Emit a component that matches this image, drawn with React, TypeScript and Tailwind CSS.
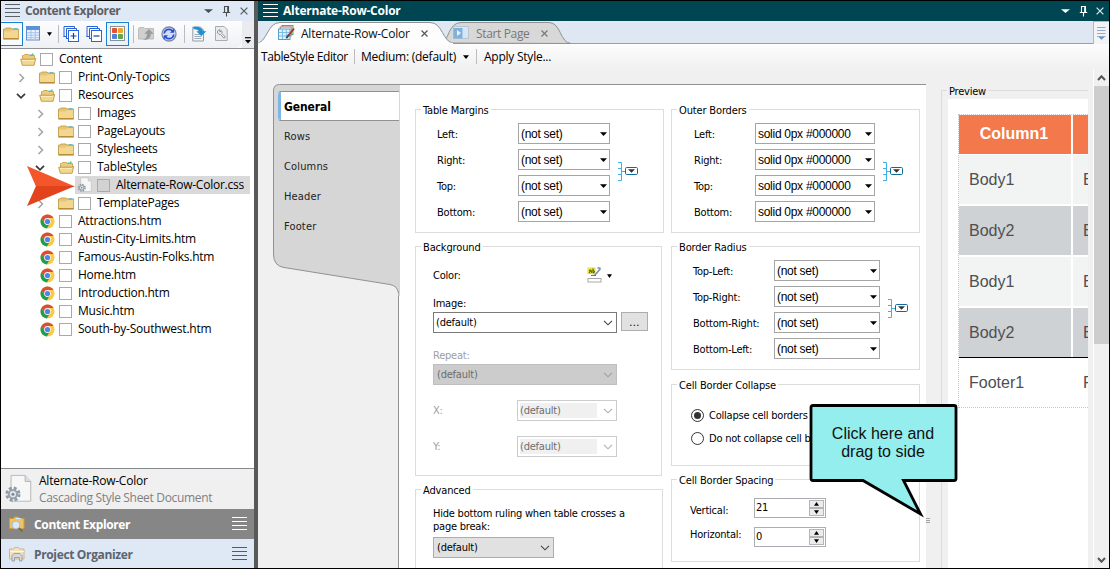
import React from "react";

const UI = "font-['Open_Sans','Noto_Sans',sans-serif] text-[12px] tracking-[-0.24px]";
const FORM = "font-['DejaVu_Sans_Condensed','DejaVu_Sans',sans-serif] text-[11px] tracking-[-0.22px]";
const SANS = "font-['Liberation_Sans',Arial,sans-serif] text-[12px] tracking-[-0.28px]";

/* ---------- icons ---------- */

function Lines({ color }: { color: string }) {
  return (
    <svg width="16" height="14" viewBox="0 0 16 14" shapeRendering="crispEdges" className="shrink-0">
      {[0, 4, 8, 12].map((y) => (
        <rect key={y} x="0" y={y} width="15" height="1" fill={color} />
      ))}
    </svg>
  );
}

function Folder({ open = false }: { open?: boolean }) {
  return (
    <svg width="17" height="15" viewBox="0 0 17 15" className="shrink-0">
      {open ? (
        <>
          <path d="M2.5 13V3.5h1l1-1h4l1 1h5V8" fill="#eccb80" stroke="#c9a24d" strokeWidth="0.9" />
          <path d="M9.5 3h3.5" stroke="#37b5d6" />
          <rect x="12" y="1.5" width="1.6" height="1.4" fill="#4bd06a" />
          <path d="M0.7 7.2h12.8l2.2-0.8-1.6 6.9H2.3z" fill="#f3d78f" stroke="#c39a40" strokeWidth="0.9" />
          <path d="M2 8.5h12" stroke="#fff1c8" strokeWidth="0.8" />
        </>
      ) : (
        <>
          <path d="M0.5 13.2V3.1h1.2l1-1.1H8l1 1h6.5v10.2z" fill="#e6c577" stroke="#c39c48" strokeWidth="0.9" />
          <path d="M10.5 2.8h4" stroke="#37b5d6" />
          <path d="M1 5.6h6.5l1.4-1.3h6.3V12.7H1z" fill="#f3d78f" />
          <path d="M1 12.5h14.5" stroke="#b98c3c" />
        </>
      )}
    </svg>
  );
}

function Chrome() {
  return (
    <svg width="15" height="15" viewBox="0 0 30 30" className="shrink-0">
      <circle cx="15" cy="15" r="14" fill="#fccb3d" />
      <path d="M2.9 8A14 14 0 0 1 27.1 8H15L9 18.5z" fill="#dc4b3e" />
      <path d="M2.9 8A14 14 0 0 0 13.6 28.9L20.5 18 9 18.5z" fill="#1a9d59" />
      <circle cx="15" cy="15" r="6.8" fill="#f4f4f4" />
      <circle cx="15" cy="15" r="5.2" fill="#4a86ec" />
    </svg>
  );
}

function CssFile({ size }: { size: number }) {
  return (
    <svg width={size} height={size} viewBox="0 0 28 32" className="shrink-0">
      <path d="M5.5 1.5h15l6 6.5v21h-21z" fill="#f7f7f7" stroke="#b5b5b5" />
      <path d="M20.5 1.500V8h6" fill="#dcdcdc" stroke="#b5b5b5" />
      <circle cx="7.5" cy="21.5" r="6.6" fill="none" stroke="#8f9aa5" strokeWidth="3" strokeDasharray="3.1 2.1" />
      <circle cx="7.5" cy="21.5" r="4.4" fill="#e4e9ee" stroke="#96a1ac" strokeWidth="2.2" />
      <circle cx="7.5" cy="21.5" r="1.6" fill="#7d8893" />
    </svg>
  );
}

function Caret({ color = "#000", w = 7 }: { color?: string; w?: number }) {
  return (
    <svg width={w} height="4" viewBox="0 0 6 4" className="shrink-0" preserveAspectRatio="none">
      <path d="M0 0.300h6L3 3.900z" fill={color} />
    </svg>
  );
}

function ChevronDown({ color }: { color: string }) {
  return (
    <svg width="10" height="6" viewBox="0 0 10 6" className="shrink-0">
      <path d="M1 0.8l4 4 4-4" fill="none" stroke={color} strokeWidth="1.1" />
    </svg>
  );
}

function Pin({ color }: { color: string }) {
  return (
    <svg width="9" height="11" viewBox="0 0 9 11" className="shrink-0">
      <path d="M2.5 6V0.5h4V6M5.7 0.5V6M0.8 6.5h7.4M4.5 7v3.6" fill="none" stroke={color} strokeWidth="1.1" />
    </svg>
  );
}

function Cross({ color, size = 8 }: { color: string; size?: number }) {
  return (
    <svg width={size} height={size} viewBox="0 0 8 8" className="shrink-0">
      <path d="M0.6 0.6l6.8 6.8M7.4 0.6L0.6 7.4" stroke={color} strokeWidth="1.3" />
    </svg>
  );
}

function Link() {
  return (
    <svg width="20" height="20" viewBox="0 0 20 20" className="shrink-0">
      <path d="M0 0.5h3.5v18H0M0 6.5h3.5M0 12.5h3.5M3.5 9.5h3.5" fill="none" stroke="#3db1ea" />
      <rect x="7.5" y="5.5" width="12" height="7" rx="1.2" fill="#fff" stroke="#0d6a9c" />
      <path d="M10 7.3h7l-3.5 3.5z" fill="#333" />
    </svg>
  );
}

/* ---------- content explorer ---------- */

function Divider() {
  return <div className="h-[18px] w-px shrink-0 bg-[#b9bcc2]" />;
}

function ExplorerToolbar() {
  return (
    <div className="flex h-[28px] shrink-0 border-b border-[#8f9297] bg-[#f6f8fa]">
      <div className="flex w-[241px] items-center rounded-br-lg bg-linear-to-b from-[#fdfdfe] to-[#eef0f3] pb-[2px]">
        <div className="flex h-[24px] w-[22px] items-center border border-l-0 border-[#1c7fd6] bg-[#f7fbff] pl-[2px]">
          <Folder />
        </div>
        <svg width="14" height="15" viewBox="0 0 14 15" className="ml-[3px]">
          <rect x="0.5" y="0.5" width="13" height="13.5" fill="#e9f2fe" stroke="#5f90cf" />
          <rect x="0.5" y="0.5" width="13" height="3.5" fill="#5a92dc" />
          <path d="M1 6.7h12M1 9.2h12M1 11.7h12M5 4v10M9.3 4v10" stroke="#a5c1ea" />
        </svg>
        <div className="ml-[7px] flex"><Caret w={5} /></div>
        <div className="ml-[6px]"><Divider /></div>
        {[true, false].map((plus) => (
          <svg key={String(plus)} width="16" height="16" viewBox="0 0 16 16" className={plus ? "ml-[4px]" : "ml-[7px]"}>
            <path d="M1 11V0.5H11.500V3M3.500 13V2.500H13.500V5" fill="none" stroke="#2a62d8" />
            <path d="M0.500 10.500h3M3 12.500h3" stroke="#2a62d8" />
            <rect x="5.5" y="4.5" width="10" height="11" fill="#fff" stroke="#2a62d8" />
            <path d={plus ? "M7.5 10h6M10.5 7v6" : "M7.5 10h6"} stroke="#123e9e" strokeWidth="1.2" />
          </svg>
        ))}
        <div className="ml-[4px] flex h-[24px] w-[23px] items-center justify-center border border-[#1c7fd6] bg-[#e9f3fd]">
          <svg width="15" height="15" viewBox="0 0 15 15">
            <rect x="0.5" y="0.5" width="14" height="14" fill="#fff" stroke="#8a8f98" />
            <rect x="2" y="2" width="5" height="5" rx="0.8" fill="#e8502f" />
            <rect x="8" y="2" width="5" height="5" rx="0.8" fill="#f0a52d" />
            <rect x="2" y="8" width="5" height="5" rx="0.8" fill="#4c83df" />
            <rect x="8" y="8" width="5" height="5" rx="0.8" fill="#5fa944" />
          </svg>
        </div>
        <div className="ml-[4px]"><Divider /></div>
        <svg width="17" height="15" viewBox="0 0 17 15" className="ml-[4px]">
          <path d="M0.5 13V2.5l1-1H6l1 1h8.5V13z" fill="#cfcfcf" stroke="#bdbdbd" />
          <path d="M4 13.800c3.600-0.600 5-2.600 5-6.100H6.300L11 3l4.600 4.700h-2.800c0 4.300-2.600 6.600-8.800 6.100z" fill="#9a9a9a" />
        </svg>
        <svg width="16" height="16" viewBox="0 0 16 16" className="ml-[6px]">
          <circle cx="8" cy="8" r="7" fill="#d3dcf7" stroke="#7d87a8" strokeWidth="1.3" />
          <path d="M3.200 7.500a4.800 4.800 0 0 1 8.300-2.600M12.800 8.500a4.800 4.800 0 0 1-8.300 2.600" fill="none" stroke="#234fd0" strokeWidth="1.7" />
          <path d="M13.200 2.600v4.200H9zM2.800 13.400V9.200H7z" fill="#234fd0" />
        </svg>
        <div className="ml-[7px]"><Divider /></div>
        <svg width="15" height="16" viewBox="0 0 15 16" className="ml-[7px]">
          <path d="M0.8 1h7.7l3 3v11H0.8z" fill="#f4f6f8" stroke="#929da8" />
          <path d="M2.5 8.5h7M2.5 10.5h7M2.5 12.5h7" stroke="#a2abb5" />
          <path d="M1.500 1c5-0.900 8.700 0.600 9.600 4.200h3.200l-5 4.800-5-4.800h2.500C6.300 3.800 4.600 3 1.500 3.200z" fill="#1f8fd0" />
        </svg>
        <svg width="13" height="15" viewBox="0 0 13 15" className="ml-[8px]">
          <path d="M0.5 0.5h8.7l3 3v11H0.5z" fill="#e9ebec" stroke="#a6adb2" />
          <path d="M4.700 3.600a2.500 2.500 0 0 0-1.900 3.500 2.500 2.500 0 0 0 2.800 1.300l3.300 3.800 1.400-1.300-3.500-3.600a2.500 2.500 0 0 0-0.600-2.800L5 6.200z" fill="#fafafa" stroke="#7d8489" strokeWidth="0.9" />
        </svg>
      </div>
      <div className="flex flex-1 items-end justify-center bg-[#e9ebee] pb-[4px]">
        <svg width="6" height="7" viewBox="0 0 6 7">
          <path d="M0 0.7h6" stroke="#000" strokeWidth="1.2" />
          <path d="M0 3h6L3 6.4z" fill="#000" />
        </svg>
      </div>
    </div>
  );
}

type Node = { name: string; depth: number; kind: "folder" | "open" | "htm" | "css"; chev?: "right" | "down" };

const tree: Node[] = [
  { name: "Content", depth: 0, kind: "open" },
  { name: "Print-Only-Topics", depth: 1, kind: "folder", chev: "right" },
  { name: "Resources", depth: 1, kind: "open", chev: "down" },
  { name: "Images", depth: 2, kind: "folder", chev: "right" },
  { name: "PageLayouts", depth: 2, kind: "folder", chev: "right" },
  { name: "Stylesheets", depth: 2, kind: "folder", chev: "right" },
  { name: "TableStyles", depth: 2, kind: "open", chev: "down" },
  { name: "Alternate-Row-Color.css", depth: 3, kind: "css" },
  { name: "TemplatePages", depth: 2, kind: "folder", chev: "right" },
  { name: "Attractions.htm", depth: 1, kind: "htm" },
  { name: "Austin-City-Limits.htm", depth: 1, kind: "htm" },
  { name: "Famous-Austin-Folks.htm", depth: 1, kind: "htm" },
  { name: "Home.htm", depth: 1, kind: "htm" },
  { name: "Introduction.htm", depth: 1, kind: "htm" },
  { name: "Music.htm", depth: 1, kind: "htm" },
  { name: "South-by-Southwest.htm", depth: 1, kind: "htm" },
];

const indents = ["pl-0", "pl-[19px]", "pl-[38px]", "pl-[57px]"];

function TreeRow({ node }: { node: Node }) {
  const css = node.kind === "css";
  return (
    <div className={`flex h-[18px] items-center ${indents[node.depth]}`}>
      <div className="flex w-[17px] shrink-0 justify-end pr-[11px]">
        {node.chev && (
          <svg width="10" height="10" viewBox="0 0 10 10" className="mt-[2px] shrink-0">
            {node.chev === "right" ? (
              <path d="M3.5 1l4 4-4 4" fill="none" stroke="#a3a3a3" strokeWidth="1.5" />
            ) : (
              <path d="M1 2.8l4 4 4-4" fill="none" stroke="#3b3b3b" strokeWidth="1.8" />
            )}
          </svg>
        )}
      </div>
      <div className={`flex h-[18px] items-center ${css ? "w-[175px] bg-[#d9d9d9]" : ""}`}>
        <div className="flex w-[22px] shrink-0 items-center pl-[2px]">
          {node.kind === "folder" && <Folder />}
          {node.kind === "open" && <Folder open />}
          {node.kind === "htm" && <div className="pl-px"><Chrome /></div>}
          {css && <CssFile size={16} />}
        </div>
        <div className={`mt-px h-[13px] w-[13px] shrink-0 border border-[#a9a9a9] ${css ? "bg-[#d2d2d2]" : "bg-white"}`} />
        <span className="ml-[6px] whitespace-nowrap leading-[18px]">{node.name}</span>
      </div>
    </div>
  );
}

function Explorer() {
  return (
    <aside className={`flex w-[253px] shrink-0 flex-col bg-white text-black ${UI}`}>
      <div className="flex h-[20px] shrink-0 items-center bg-[#dfe8f5] pl-[4px] text-[#5b5f66]">
        <Lines color="#5b5f66" />
        <span className="ml-[4px] flex-1 font-bold leading-[20px] tracking-[-0.4px]">Content Explorer</span>
        <Caret color="#4a4d52" w={9} />
        <div className="ml-[9px]"><Pin color="#4a4d52" /></div>
        <div className="ml-[9px] mr-[6px]"><Cross color="#5b5f66" /></div>
      </div>
      <ExplorerToolbar />
      <div className="relative flex-1 pt-px">
        {tree.map((n) => (
          <TreeRow key={n.name} node={n} />
        ))}
        <svg width="50" height="42" viewBox="0 0 50 42" className="absolute left-[25px] top-[116px]">
          <path d="M1 1l48 20.5H10z" fill="#f4562b" />
          <path d="M1 41l48-20H10z" fill="#e2421c" />
        </svg>
      </div>
      <div className="flex h-[41px] shrink-0 items-center border-t border-[#85888c] bg-[#f0f0f0] pl-[3px]">
        <CssFile size={30} />
        <div className="ml-[5px] flex flex-col gap-px">
          <span className="leading-[16px]">Alternate-Row-Color</span>
          <span className="leading-[16px] tracking-[-0.32px] text-[#808080]">Cascading Style Sheet Document</span>
        </div>
      </div>
      <div className="flex h-[30px] shrink-0 items-center bg-[#868686] pl-[8px] text-white">
        <svg width="16" height="16" viewBox="0 0 16 16">
          <path d="M0.5 12.5v-10h4l1-1.500h4l1 1.500h4.500v10z" fill="#f0c465" stroke="#d19a35" />
          <path d="M7 2.5h5" stroke="#c9ecf5" />
          <circle cx="7" cy="9" r="4" fill="#dce8f5" stroke="#aab8c6" />
          <path d="M9.8 12l3.5 3.5" stroke="#666" strokeWidth="1.6" />
        </svg>
        <span className="ml-[9px] mt-px flex-1 font-bold tracking-[-0.35px]">Content Explorer</span>
        <div className="mr-[6px] flex"><Lines color="#fff" /></div>
      </div>
      <div className="flex h-[29px] shrink-0 items-center bg-[#dfe8f5] pl-[8px] text-[#5b6470]">
        <svg width="16" height="16" viewBox="0 0 16 16">
          <path d="M0.5 13V3h4l1-1.500h4l1 1.500H15v10z" fill="#f2e2bd" stroke="#cdb88b" />
          <path d="M1 5.5h14" stroke="#fff6df" />
          <path d="M3 15V9.500l2-2h6l2 2V15h-2.500v-3.500h-5V15z" fill="#d5d8dc" stroke="#9ca1a8" />
        </svg>
        <span className="ml-[9px] mt-[2px] flex-1 font-bold tracking-[-0.35px]">Project Organizer</span>
        <div className="mr-[6px] mt-px flex"><Lines color="#555b63" /></div>
      </div>
    </aside>
  );
}

/* ---------- form controls ---------- */

function Group({ title, className, children }: { title: string; className: string; children: React.ReactNode }) {
  return (
    <section className={`relative border border-[#dcdcdc] ${className}`}>
      <h2 className="absolute -top-[7px] left-[5px] whitespace-nowrap bg-white px-[2px] leading-[15px] tracking-[-0.15px]">{title}</h2>
      {children}
    </section>
  );
}

function Combo({ value, className }: { value: string; className: string }) {
  return (
    <div className={`flex h-[21px] items-center justify-between border border-[#a5a5a5] bg-white pl-[2px] pr-[2px] ${SANS} ${className}`}>
      <span className="whitespace-nowrap">{value}</span>
      <Caret />
    </div>
  );
}

function FieldRows({ labels, value, width, className }: { labels: string[]; value: string; width: string; className: string }) {
  return (
    <div className={`flex flex-col gap-[5px] ${className}`}>
      {labels.map((l) => (
        <div key={l} className="flex h-[21px] items-center">
          <span className="mt-[4px] flex-1 whitespace-nowrap">{l}</span>
          <Combo value={value} className={width} />
        </div>
      ))}
    </div>
  );
}

function Radio({ on, label }: { on?: boolean; label: string }) {
  return (
    <div className="flex h-[23px] items-center">
      <div className="flex h-[13px] w-[13px] shrink-0 items-center justify-center rounded-full border border-[#333]">
        {on && <div className="h-[7px] w-[7px] rounded-full bg-[#333]" />}
      </div>
      <span className="ml-[5px] mt-px whitespace-nowrap">{label}</span>
    </div>
  );
}

function Spinner({ label, value, shift }: { label: string; value: string; shift: string }) {
  return (
    <div className="flex h-[20px] items-center">
      <span className={`w-[64px] ${shift}`}>{label}</span>
      <div className="flex h-[20px] w-[72px] border border-[#abadb3] bg-white">
        <span className="flex-1 pl-px leading-[18px]">{value}</span>
        <div className="my-px mr-px flex w-[15px] flex-col">
          <div className="flex flex-1 rotate-180 items-center justify-center border border-[#b5b5b5] bg-[#ececec]"><Caret w={5} /></div>
          <div className="flex flex-1 items-center justify-center border border-[#b5b5b5] bg-[#ececec]"><Caret w={5} /></div>
        </div>
      </div>
    </div>
  );
}

function DisabledAxis({ label }: { label: string }) {
  return (
    <div className="flex h-[21px] items-center">
      <span className="mt-px w-[84px] text-[#a0a0a0]">{label}</span>
      <div className="flex h-[21px] w-[100px] items-center justify-between border border-[#cccccc] bg-white pl-[2px] pr-[3px] text-[#6d6d6d]">
        <span className="h-[15px] w-[77px] bg-[#f0f0f0] leading-[15px]">(default)</span>
        <ChevronDown color="#b0b0b0" />
      </div>
    </div>
  );
}

function StyleForm() {
  return (
    <div className={`flex w-[528px] shrink-0 gap-[7px] border-l border-t border-[#919191] bg-white pl-[16px] pt-[24px] ${FORM}`}>
      <div className="flex w-[249px] shrink-0 flex-col">
        <Group title="Table Margins" className="flex h-[124px] shrink-0">
          <FieldRows labels={["Left:", "Right:", "Top:", "Bottom:"]} value="(not set)" width="w-[92px]" className="ml-[21px] mt-[13px] w-[173px]" />
          <div className="ml-[8px] mt-[52px]"><Link /></div>
        </Group>
        <Group title="Background" className="mt-[13px] h-[230px] w-[247px] shrink-0 pl-[17px]">
          <div className="mt-[19px] flex h-[18px] items-center">
            <span className="mt-[2px] w-[154px]">Color:</span>
            <svg width="15" height="16" viewBox="0 0 15 16">
              <rect x="0.5" y="0.5" width="8" height="6.5" fill="#e8e23d" />
              <path d="M2 3.800c1.400-1.500 2.400-0.800 2.400 0.600v1.400M4.200 4.200c-2.300 0-2.400 1.700-1.100 1.700M6 1.500v4.400c2 .3 2-2.700.2-2.200" fill="none" stroke="#4a4a16" strokeWidth="1" />
              <path d="M13.5 1.500L7.8 8.200M10.5 1h3" fill="none" stroke="#7a93ae" strokeWidth="1.7" />
              <path d="M4 8.400h5" stroke="#6d6533" />
              <rect x="1" y="11.500" width="13" height="3.500" fill="#fff" stroke="#a9a9a9" />
            </svg>
            <div className="ml-[5px] mt-[2px] flex"><Caret w={5} /></div>
          </div>
          <div className="mt-[12px] h-[15px] leading-[15px]">Image:</div>
          <div className="mt-px flex">
            <div className="flex h-[21px] w-[184px] items-center justify-between border border-[#7a7a7a] pl-[2px] pr-[3px]">
              <span className="mt-px">(default)</span>
              <ChevronDown color="#444" />
            </div>
            <div className="ml-[4px] h-[19px] w-[27px] border border-[#adadad] bg-[#e1e1e1] text-center leading-[19px] tracking-[0.4px]">...</div>
          </div>
          <div className="mt-[15px] h-[15px] leading-[15px] text-[#a0a0a0]">Repeat:</div>
          <div className="mt-px flex h-[21px] w-[184px] items-center justify-between border border-[#bfbfbf] bg-[#cccccc] pl-[3px] pr-[3px] text-[#6d6d6d]">
            <span className="mt-px">(default)</span>
            <ChevronDown color="#a0a0a0" />
          </div>
          <div className="mt-[15px] flex flex-col gap-[15px]">
            <DisabledAxis label="X:" />
            <DisabledAxis label="Y:" />
          </div>
        </Group>
        <Group title="Advanced" className="mt-[13px] h-[100px] w-[248px] shrink-0 pl-[17px] pt-[17px]">
          <p className="w-[210px] leading-[13px]">Hide bottom ruling when table crosses a page break:</p>
          <div className="mt-[4px] flex h-[21px] w-[121px] items-center justify-between border border-[#adadad] bg-[#e1e1e1] pl-[3px] pr-[3px]">
            <span className="mt-px">(default)</span>
            <ChevronDown color="#444" />
          </div>
        </Group>
      </div>
      <div className="flex w-[249px] shrink-0 flex-col">
        <Group title="Outer Borders" className="flex h-[124px] shrink-0">
          <FieldRows labels={["Left:", "Right:", "Top:", "Bottom:"]} value="solid 0px #000000" width="w-[120px]" className="ml-[22px] mt-[13px] w-[181px]" />
          <div className="ml-[8px] mt-[52px]"><Link /></div>
        </Group>
        <Group title="Border Radius" className="mt-[13px] flex h-[124px] shrink-0">
          <FieldRows labels={["Top-Left:", "Top-Right:", "Bottom-Right:", "Bottom-Left:"]} value="(not set)" width="w-[106px]" className="ml-[21px] mt-[13px] w-[187px]" />
          <div className="ml-[8px] mt-[52px]"><Link /></div>
        </Group>
        <Group title="Cell Border Collapse" className="mt-[14px] h-[82px] shrink-0 pl-[19px] pt-[19px]">
          <Radio on label="Collapse cell borders" />
          <Radio label="Do not collapse cell borders" />
        </Group>
        <Group title="Cell Border Spacing" className="mt-[13px] flex h-[83px] shrink-0 flex-col gap-[9px] pl-[18px] pt-[18px]">
          <Spinner label="Vertical:" value="21" shift="mt-[6px]" />
          <Spinner label="Horizontal:" value="0" shift="-mt-[4px]" />
        </Group>
      </div>
    </div>
  );
}

/* ---------- side tabs ---------- */

function SideTabs() {
  return (
    <nav className={`relative w-[125px] shrink-0 ${FORM}`}>
      <svg width="127" height="212" viewBox="0 0 127 212" className="absolute left-0 top-0">
        <path
          d="M127 0.5H6.5Q0.5 0.5 0.5 7V170Q0.5 182 11 183.5L117 200.5Q124.5 202 125.5 209V212H127z"
          fill="#d6d6d6"
        />
        <path d="M127 0.5H6.5Q0.5 0.5 0.5 7V170Q0.5 182 11 183.5L117 200.5Q124.5 202 125.5 209" fill="none" stroke="#919191" />
      </svg>
      <div className="relative z-10 ml-[5px] mt-[7px] flex h-[30px] w-[121px] items-center rounded-l-[3px] border-y border-[#919191] bg-white">
        <div className="h-full w-[3px] rounded-l-[3px] bg-[#7cb5ea]" />
        <span className="ml-[3px] mt-[2px] text-[12px] font-bold tracking-[-0.1px]">General</span>
      </div>
      {["Rows", "Columns", "Header", "Footer"].map((t) => (
        <div key={t} className="relative flex h-[30px] items-center pl-[11px] pt-[3px] text-[#222] tracking-[0.15px]">{t}</div>
      ))}
    </nav>
  );
}

/* ---------- preview ---------- */

const previewRows = [
  { a: "Body1", b: "B", cls: "bg-[#f2f4f4]" },
  { a: "Body2", b: "B", cls: "bg-[#cfd2d4]" },
  { a: "Body1", b: "B", cls: "bg-[#f2f4f4]" },
  { a: "Body2", b: "B", cls: "bg-[#cfd2d4]" },
];

function Preview() {
  return (
    <div className="relative ml-[15px] mt-[6px] w-[147px] border-l border-t border-[#dcdcdc] pl-[6px] pt-[8px]">
      <h2 className={`absolute -top-[6px] left-[5px] bg-[#f0f0f0] px-[2px] leading-[14px] ${FORM}`}>Preview</h2>
      <div className="h-full overflow-hidden bg-white pl-[10px] pt-[15px] font-['Liberation_Sans',Arial,sans-serif] text-[16px] text-[#4d4f51]">
        <div className="w-[160px] border-l border-t border-dotted border-[#c9c9c9]">
          <div className="mb-px flex h-[39px] gap-[2px]">
            <div className="w-[112px] bg-[#f3784b] pr-[2px] text-center font-bold leading-[38px] text-white">Column1</div>
            <div className="flex-1 bg-[#f3784b]" />
          </div>
          {previewRows.map((r, i) => (
            <div key={i} className={`flex h-[49px] gap-[2px] leading-[50px] ${i < 3 ? "mb-[2px]" : ""}`}>
              <div className={`w-[112px] pl-[10px] ${r.cls}`}>{r.a}</div>
              <div className={`flex-1 pl-[10px] ${r.cls}`}>{r.b}</div>
            </div>
          ))}
          <div className="flex h-[51px] gap-[2px] border-t border-b border-b-[#c9c9c9] border-t-black leading-[49px] [border-bottom-style:dotted] [border-top-style:solid]">
            <div className="w-[112px] pl-[10px]">Footer1</div>
            <div className="flex-1 pl-[10px]">F</div>
          </div>
        </div>
      </div>
    </div>
  );
}

/* ---------- editor ---------- */

function TabStrip() {
  return (
    <div className={`relative h-[23px] shrink-0 bg-[#dfe7f2] ${UI}`}>
      <svg width="851" height="23" viewBox="0 0 851 23" className="absolute left-0 top-0">
        <path d="M0 22.5H851" stroke="#9b9fa5" />
        <path d="M184 22C190 22 190 1.5 203 1.5H291C303 1.5 302 22 313 22.5z" fill="#d8d8d8" stroke="#919191" />
        <path d="M-2 22.5C9 22.5 9 1.5 22 1.5H172C185 1.5 184 21 196 22.5" fill="#fdfdfd" stroke="#919191" />
        <path d="M0 22.5H195" stroke="#fdfdfd" strokeWidth="1.4" />
      </svg>
      <div className="relative flex h-[23px] items-center">
        <svg width="17" height="16" viewBox="0 0 17 16" className="ml-[20px] shrink-0">
          <rect x="4" y="0.5" width="11" height="9" fill="#dcecdc" stroke="#6b9b76" />
          <rect x="2.2" y="2" width="11" height="9" fill="#fff" stroke="#d86b62" />
          <rect x="0.5" y="4" width="11.5" height="10.5" fill="#dff2fc" stroke="#5a9fc8" />
          <path d="M1 7.5h11M1 11h11M4.5 4v10M8.3 4v10" stroke="#7bc0e4" />
          <path d="M16 3.5l-5.5 7" stroke="#b33127" strokeWidth="2" />
          <path d="M10.8 9.8L8.5 13" stroke="#444" strokeWidth="2" />
        </svg>
        <span className="ml-[6px] mt-[2px] w-[120px] text-[#111]">Alternate-Row-Color</span>
        <div className="mt-[2px] flex"><Cross color="#555" size={7} /></div>
        <svg width="16" height="13" viewBox="0 0 16 13" className="ml-[25px] shrink-0">
          <rect x="0.5" y="0.5" width="15" height="12" fill="#d8e6f2" stroke="#b7c6d3" />
          <rect x="0.5" y="2" width="9" height="10.5" fill="#80b1da" />
          <path d="M4 4v6l4-3z" fill="#e9f3fb" />
        </svg>
        <span className="ml-[7px] mt-[2px] w-[65px] tracking-[-0.35px] text-[#777]">Start Page</span>
        <div className="mt-[2px] flex"><Cross color="#777" size={7} /></div>
        <div className="ml-auto flex h-[23px] w-[16px] items-center justify-center border-l border-t border-[#b4b8be] bg-[#f3f4f6]">
          <svg width="9" height="13" viewBox="0 0 9 13">
            <path d="M0 0.5h8.5M0 3.5h8.5M0 6.5h8.5M0 9.5h8.5" stroke="#8eabd0" />
            <path d="M1.5 10h6L4.5 12.7z" fill="#6c93c6" />
          </svg>
        </div>
      </div>
    </div>
  );
}

function Editor() {
  return (
    <main className="flex min-w-0 flex-1 flex-col bg-[#f0f0f0]">
      <div className="flex h-[20px] shrink-0 items-center bg-[#004552] pl-[5px]">
        <Lines color="#fff" />
        <span className={`ml-[4px] flex-1 font-bold leading-[20px] text-white ${UI}`}>Alternate-Row-Color</span>
        <Caret color="#fff" w={9} />
        <div className="ml-[9px]"><Pin color="#fff" /></div>
        <div className="ml-[8px] mr-[5px]"><Cross color="#d5e2e5" /></div>
      </div>
      <TabStrip />
      <div className={`flex h-[25px] shrink-0 items-center bg-linear-to-b from-[#fdfdfd] to-[#f0f0f0] pl-[3px] text-black ${UI}`}>
        <span className="w-[93px] tracking-[-0.4px]">TableStyle Editor</span>
        <div className="h-[15px] w-px bg-[#bdbdbd]" />
        <span className="ml-[6px] w-[102px]">Medium: (default)</span>
        <Caret w={6} />
        <div className="ml-[7px] h-[15px] w-px bg-[#bdbdbd]" />
        <span className="ml-[7px]">Apply Style...</span>
      </div>
      <div className="flex min-h-0 flex-1">
        <div className="flex min-w-0 flex-1 pl-[15px] pt-[15px]">
          <SideTabs />
          <StyleForm />
          <Preview />
        </div>
        <div className="flex w-[16px] shrink-0 flex-col border-l border-white">
          <div className="flex h-[17px] items-center justify-center">
            <svg width="9" height="6" viewBox="0 0 9 6"><path d="M1 5l3.5-3.700L8 5" fill="none" stroke="#555" strokeWidth="2" /></svg>
          </div>
          <div className="h-[258px] bg-[#cdcdcd]" />
          <div className="mt-auto flex h-[17px] items-center justify-center">
            <svg width="9" height="6" viewBox="0 0 9 6"><path d="M1 1l3.500 3.700L8 1" fill="none" stroke="#555" strokeWidth="2" /></svg>
          </div>
        </div>
      </div>
    </main>
  );
}

export default function App() {
  return (
    <div className="relative flex h-[569px] w-[1110px] overflow-hidden border border-black bg-[#f0f0f0]">
      <Explorer />
      <div className="w-[4px] shrink-0 bg-[#595959]" />
      <Editor />
      <svg width="5" height="6" viewBox="0 0 5 6" shapeRendering="crispEdges" className="absolute left-[925px] top-[517px]">
        <path d="M0 0.5h4M0 2.5h4M0 4.5h4" stroke="#a3a3a3" />
      </svg>
      <div className="absolute left-[808px] top-[402px] h-[116px] w-[152px]">
        <svg width="152" height="116" viewBox="0 0 152 116" className="absolute inset-0">
          <path
            d="M4 2.5H145Q147 2.5 147 4.500V75.500Q147 77.500 145 77.500H94.500L111.500 111 54 77.500H4Q2 77.500 2 75.500V4.500Q2 2.500 4 2.500z"
            fill="#94eeed"
            stroke="#000"
            strokeWidth="2.8"
          />
        </svg>
        <p className="relative w-[148px] pt-[22px] text-center font-['Liberation_Sans',Arial,sans-serif] text-[16px] leading-[18px] text-[#111]">
          Click here and
          <br />
          drag to side
        </p>
      </div>
    </div>
  );
}
